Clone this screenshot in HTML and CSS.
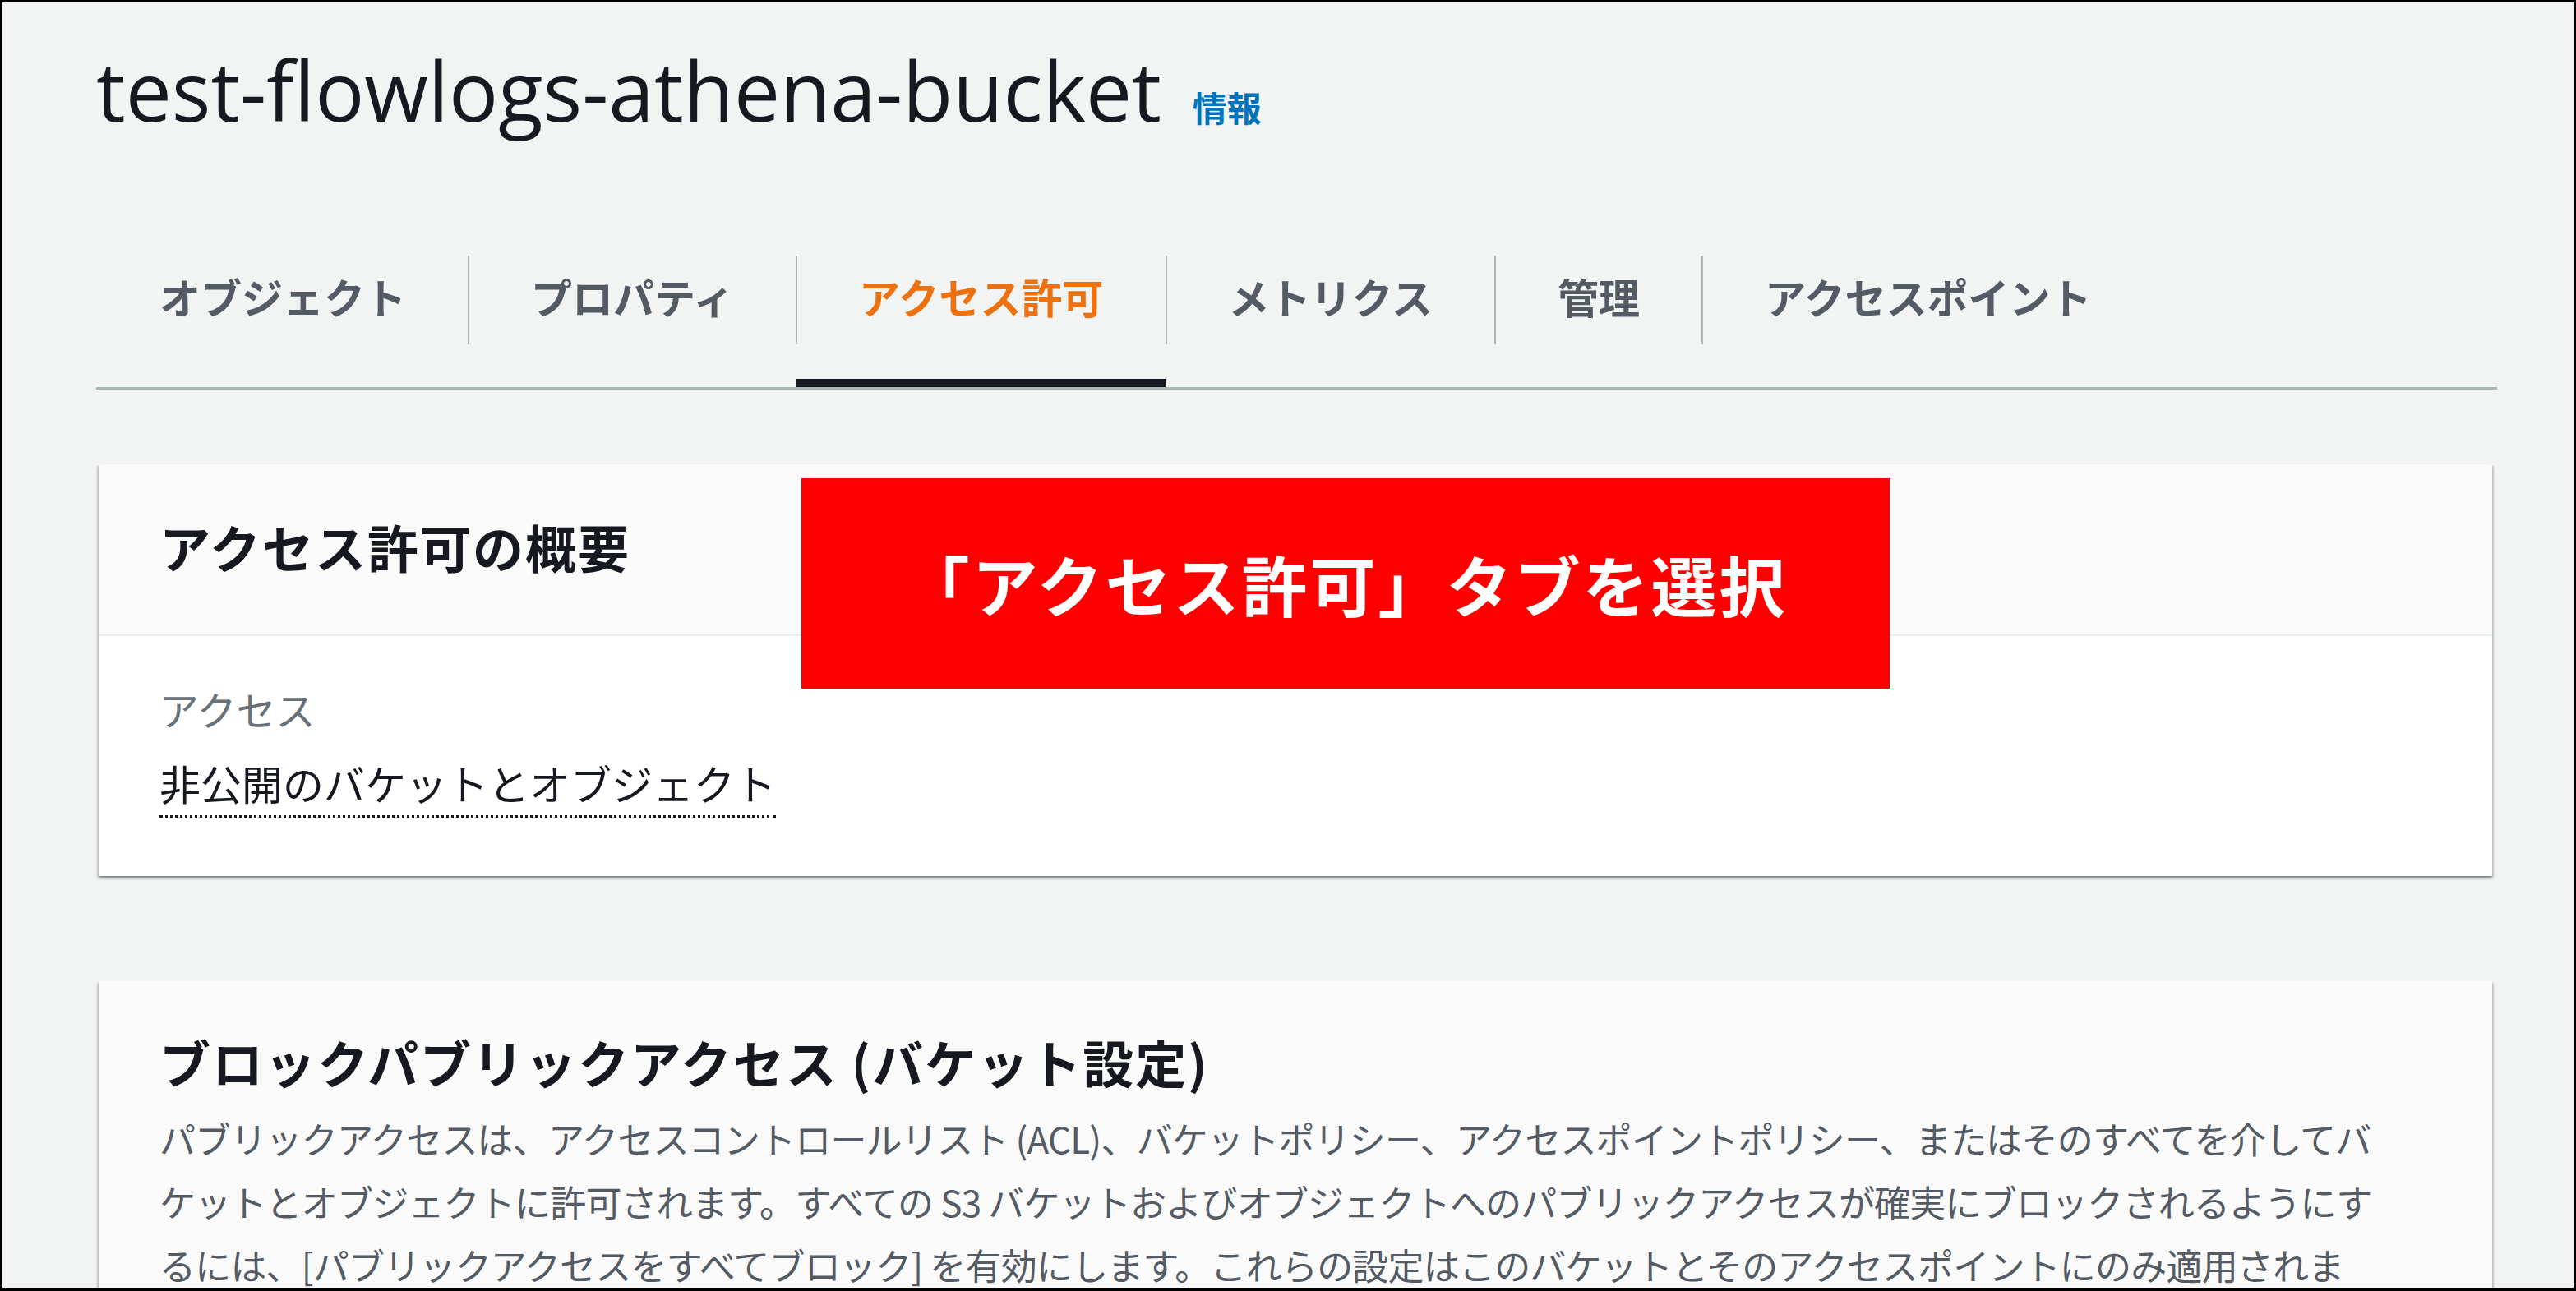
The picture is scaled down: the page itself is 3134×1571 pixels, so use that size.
FILE: index.html
```html
<!DOCTYPE html>
<html lang="ja">
<head>
<meta charset="utf-8">
<title>test-flowlogs-athena-bucket</title>
<link rel="stylesheet" href="styles.css">
</head>
<body>
<div class="frame">
  <div class="page">
    <header class="title-row">
      <h1 class="title">test-flowlogs-athena-bucket</h1>
      <a class="info-link">情報</a>
    </header>

    <nav class="tabs">
      <div class="tab"><span class="tab-label first">オブジェクト</span></div>
      <div class="tab"><span class="tab-label sep">プロパティ</span></div>
      <div class="tab active"><span class="tab-label sep">アクセス許可</span></div>
      <div class="tab"><span class="tab-label sep">メトリクス</span></div>
      <div class="tab"><span class="tab-label sep">管理</span></div>
      <div class="tab"><span class="tab-label sep">アクセスポイント</span></div>
    </nav>

    <section class="panel">
      <div class="panel-header">
        <h2 class="panel-title">アクセス許可の概要</h2>
      </div>
      <div class="panel-body">
        <div class="field-label">アクセス</div>
        <div class="field-value"><span class="dotted">非公開のバケットとオブジェクト</span></div>
      </div>
    </section>

    <section class="panel panel-plain">
      <h2 class="panel-title block-title">ブロックパブリックアクセス (バケット設定)</h2>
      <p class="desc">パブリックアクセスは、アクセスコントロールリスト (ACL)、バケットポリシー、アクセスポイントポリシー、またはそのすべてを介してバ<br>ケットとオブジェクトに許可されます。すべての S3 バケットおよびオブジェクトへのパブリックアクセスが確実にブロックされるようにす<br>るには、[パブリックアクセスをすべてブロック] を有効にします。これらの設定はこのバケットとそのアクセスポイントにのみ適用されま</p>
    </section>

    <div class="callout">「アクセス許可」タブを選択</div>
  </div>
</div>
</body>
</html>
```

FILE: styles.css
```css
* { box-sizing: border-box; }

html, body {
  margin: 0;
  padding: 0;
}

body {
  width: 3134px;
  height: 1571px;
  overflow: hidden;
  background: #000;
}

.frame {
  width: 3134px;
  height: 1571px;
  border: 3px solid #000;
  border-bottom-width: 4px;
  background: #f2f3f3;
  overflow: hidden;
}

.page {
  position: relative;
  padding: 48px 93px 0 114px;
  font-family: "Noto Sans CJK JP", "Noto Sans", sans-serif;
  color: #16191f;
}

.title-row {
  display: flex;
  align-items: baseline;
}

.title {
  margin: 0;
  font-family: "Open Sans", "Noto Sans", sans-serif;
  font-weight: 400;
  font-size: 100px;
  line-height: 116px;
  color: #16191f;
}

.info-link {
  margin-left: 38px;
  font-size: 42px;
  font-weight: 700;
  color: #0073bb;
}

.tabs {
  display: flex;
  margin-top: 144px;
  border-bottom: 3px solid #aab7b8;
}

.tab {
  padding-bottom: 52px;
}

.tab.active {
  box-shadow: inset 0 -10px 0 #16191f;
}

.tab-label {
  display: flex;
  align-items: center;
  height: 108px;
  padding: 0 75px 10px;
  font-size: 50px;
  font-weight: 700;
  color: #545b64;
  white-space: nowrap;
}

.tab-label.first {
  padding-left: 77px;
}

.tab-label.sep {
  border-left: 2px solid #aab7b8;
}

.tab.active .tab-label {
  color: #ec7211;
}

.panel {
  margin: 91px 6px 0 3px;
  background: #fff;
  box-shadow: 0 3px 3px 0 rgba(0, 28, 36, 0.35),
              2px 2px 2px 0 rgba(0, 28, 36, 0.12),
              -2px 2px 2px 0 rgba(0, 28, 36, 0.12);
}

.panel-header {
  display: flex;
  align-items: center;
  height: 209px;
  padding: 0 0 8px 74px;
  background: #fafafa;
  border-bottom: 2px solid #eaeded;
}

.panel-title {
  margin: 0;
  font-size: 62px;
  line-height: 80px;
  font-weight: 700;
  letter-spacing: 2px;
  color: #16191f;
}

.panel-body {
  padding: 58px 74px 71px;
}

.field-label {
  font-size: 48px;
  line-height: 60px;
  color: #687078;
}

.field-value {
  margin-top: 30px;
  font-size: 50px;
  line-height: 60px;
  color: #16191f;
}

.dotted {
  display: inline-block;
  padding-bottom: 10px;
  border-bottom: 3px dotted #16191f;
}

.panel-plain {
  margin-top: 128px;
  padding: 58px 74px 0;
  background: #fafafa;
}

.block-title {
  line-height: 80px;
}

.desc {
  margin: 15px 0 0;
  font-size: 44px;
  line-height: 77px;
  letter-spacing: -0.8px;
  color: #545b64;
  white-space: nowrap;
}

.callout {
  position: absolute;
  left: 972px;
  top: 579px;
  width: 1324px;
  height: 256px;
  padding-bottom: 2px;
  display: flex;
  align-items: center;
  justify-content: center;
  background: #ff0000;
  color: #fff;
  font-size: 80px;
  font-weight: 700;
  letter-spacing: 3px;
  white-space: nowrap;
}
```
